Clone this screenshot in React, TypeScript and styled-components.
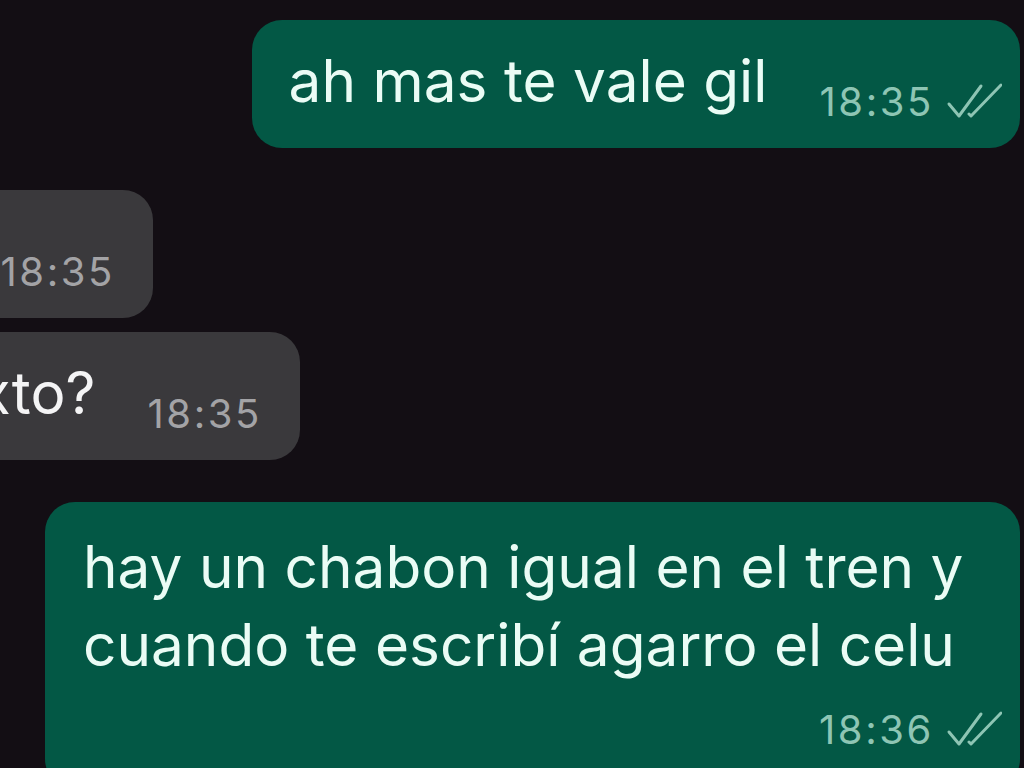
import React from 'react'
import styled, { createGlobalStyle } from 'styled-components'

const GlobalStyle = createGlobalStyle`
	html, body {
		margin: 0;
		padding: 0;
		background: #130e14;
	}
	body {
		font-family: Inter, 'Noto Sans', 'Liberation Sans', sans-serif;
	}
`

type Message = {
	id: number
	out: boolean
	text: string
	time: string
	gap: number
	edge?: number
}

const messages: Message[] = [
	{ id: 1, out: true, text: 'ah mas te vale gil', time: '18:35', gap: 0 },
	{ id: 2, out: false, text: '', time: '18:35', gap: 42, edge: 153 },
	{ id: 3, out: false, text: 'texto?', time: '18:35', gap: 14, edge: 300 },
	{
		id: 4,
		out: true,
		text: 'hay un chabon igual en el tren y\ncuando te escribí agarro el celu',
		time: '18:36',
		gap: 42,
	},
]

const DoubleTick = () => (
	<TickSvg viewBox="0 0 56 36" width={56} height={36}>
		<path d="M3 21 L13 33 L35 3" />
		<path d="M23 31 L25 33 L55 2" />
	</TickSvg>
)

export default function App() {
	return (
		<>
			<GlobalStyle />
			<Chat>
				{messages.map((m) => {
					const long = m.text.includes('\n')
					return (
						<Row key={m.id} $out={m.out} $edge={m.edge} $gapTop={m.gap}>
							<Bubble $out={m.out} $stacked={long}>
								{m.text && <Text $out={m.out} $stacked={long}>{m.text}</Text>}
								<Meta $out={m.out} $stacked={long} $empty={!m.text}>
									<Time $out={m.out}>{m.time}</Time>
									{m.out && <DoubleTick />}
								</Meta>
							</Bubble>
						</Row>
					)
				})}
			</Chat>
		</>
	)
}

const Chat = styled.div`
	width: 1024px;
	height: 768px;
	overflow: hidden;
	background: #130e14;
	display: flex;
	flex-direction: column;
	padding-top: 20px;
	box-sizing: border-box;
`

const Row = styled.div<{ $out: boolean; $edge?: number; $gapTop: number }>`
	display: flex;
	justify-content: flex-end;
	flex-shrink: 0;
	margin-top: ${(p) => p.$gapTop}px;
	width: ${(p) => (p.$edge ? `${p.$edge}px` : 'auto')};
	padding: ${(p) => (p.$out ? '0 4px 0 45px' : '0')};
`

const Bubble = styled.div<{ $out: boolean; $stacked: boolean }>`
	flex-shrink: 0;
	display: flex;
	flex-direction: ${(p) => (p.$stacked ? 'column' : 'row')};
	align-items: ${(p) => (p.$stacked ? 'stretch' : 'flex-end')};
	flex-grow: ${(p) => (p.$stacked ? 1 : 0)};
	background: ${(p) => (p.$out ? '#035845' : '#3a393c')};
	border-radius: 30px;
	padding: 23px 18px ${(p) => (p.$stacked ? 40 : 29)}px ${(p) => (p.$stacked ? 38 : 37)}px;
`

const Text = styled.div<{ $out: boolean; $stacked: boolean }>`
	color: ${(p) => (p.$out ? '#eafcf5' : '#f4f4f5')};
	font-size: 58.5px;
	line-height: ${(p) => (p.$stacked ? 78 : 76)}px;
	white-space: pre-line;
	padding-top: ${(p) => (p.$stacked ? 3 : 0)}px;
`

const Meta = styled.div<{ $out: boolean; $stacked: boolean; $empty: boolean }>`
	display: flex;
	align-items: center;
	gap: 12px;
	align-self: flex-end;
	margin-left: ${(p) => (p.$stacked ? 0 : p.$empty ? 0 : 52)}px;
	margin-top: ${(p) => (p.$stacked ? 27 : p.$empty ? 40 : 0)}px;
	margin-bottom: ${(p) => (p.$stacked ? 0 : -2)}px;
	padding-right: ${(p) => (p.$out ? 0 : 20)}px;
`

const Time = styled.span<{ $out: boolean }>`
	color: ${(p) => (p.$out ? '#8ec5b4' : '#a3a3a6')};
	font-size: 40px;
	line-height: 38px;
	letter-spacing: 2.6px;
`

const TickSvg = styled.svg`
	fill: none;
	stroke: #8ec5b4;
	stroke-width: 3;
	stroke-linecap: round;
	stroke-linejoin: round;
	margin-bottom: 2px;
`
